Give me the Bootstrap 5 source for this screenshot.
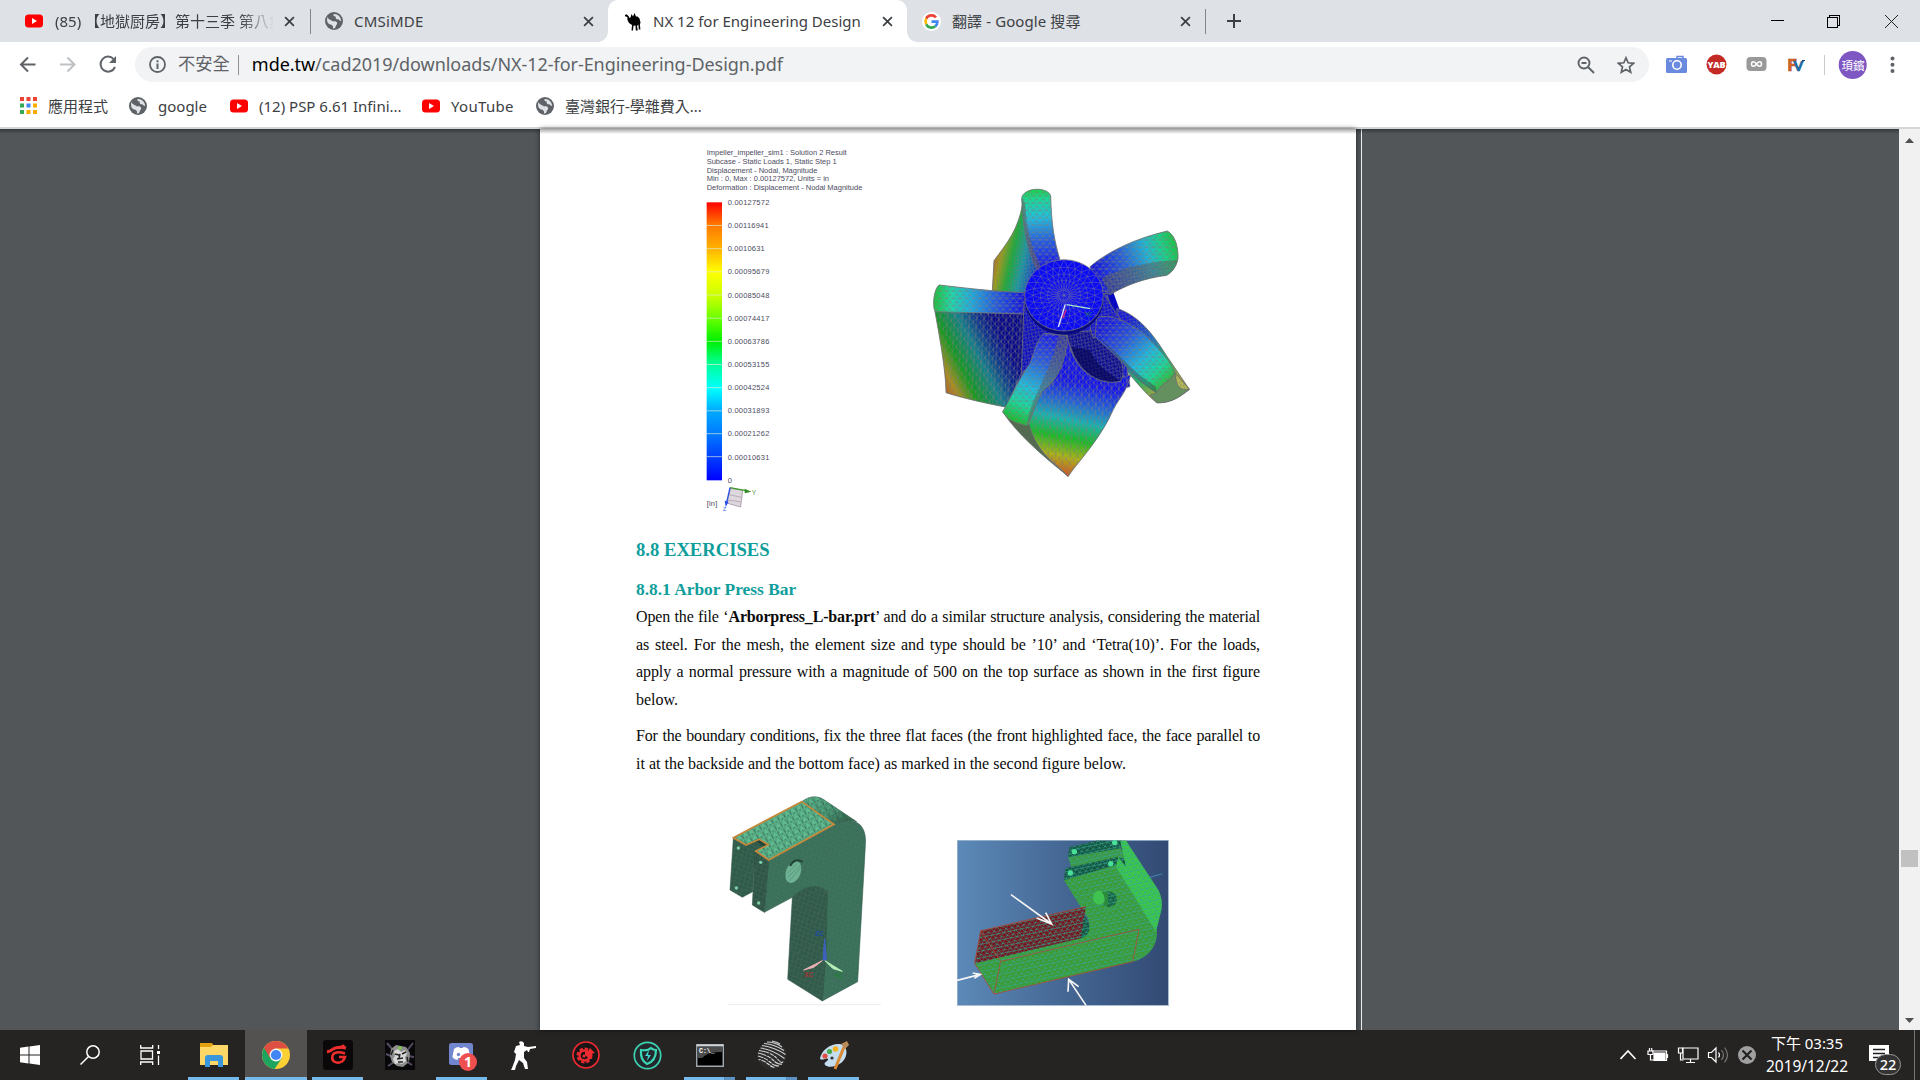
<!DOCTYPE html>
<html lang="zh-Hant">
<head>
<meta charset="utf-8">
<title>NX 12 for Engineering Design</title>
<link href="https://cdn.jsdelivr.net/npm/bootstrap@5.3.0/dist/css/bootstrap.min.css" rel="stylesheet">
<script src="https://cdn.jsdelivr.net/npm/bootstrap@5.3.0/dist/js/bootstrap.bundle.min.js"></script>
<style>
body{width:1920px;height:1080px;overflow:hidden;font-family:"Noto Sans","Noto Sans CJK TC",sans-serif;color:#3c4043;background:#fff}
svg{display:block;flex:none}
.tabstrip{height:42px;background:#dee1e6;font-size:15px;padding-left:8px}
.btab{height:42px;width:300px;padding:0 14px 0 17px;gap:11px;position:relative;flex:none}
.btab .ttl{flex:1;white-space:nowrap;overflow:hidden;line-height:24px;padding-bottom:1px}
.btab.fade-end .ttl{-webkit-mask-image:linear-gradient(90deg,#000 185px,transparent 219px)}
.btab.current{background:#fff;border-radius:10px 10px 0 0}
.btab.current::before,.btab.current::after{content:"";position:absolute;bottom:0;width:10px;height:10px}
.btab.current::before{left:-10px;background:radial-gradient(circle at 0 0,transparent 9.5px,#fff 10px)}
.btab.current::after{right:-10px;background:radial-gradient(circle at 100% 0,transparent 9.5px,#fff 10px)}
.tsep{width:1px;height:25px;background:#83868b;flex:none}
.toolbar{height:45px;background:#fff}
.omni{width:1514px;height:35px;border-radius:18px;background:#f1f3f4;font-size:18px;padding:0 14px 0 14px;color:#5f6368}
.omni span{white-space:nowrap;line-height:30px;padding-bottom:2px}
.vsep{width:1px;height:20px;background:#c8cacc;flex:none}
.marks{height:40px;font-size:15px;padding:0 0 3px 20px}
.marks span{white-space:nowrap;line-height:24px;flex:none;margin-left:11px}
.viewer{height:903px;background:#525659;border-top:2px solid #d5d6da;position:relative}
.viewer::after{content:"";position:absolute;left:0;right:21px;top:0;height:5px;background:linear-gradient(#0005,#0000)}
.sheet{width:816px;margin-left:540px;padding-left:96px;background:#fff;flex:none;height:901px;box-shadow:0 0 5px #0009}
.edge{width:1px;margin-left:5px;background:#eceef0;flex:none}
.sbar{width:21px;background:#f1f1f1;margin-left:auto}
.thumb{width:17px;height:17px;background:#c1c1c1;margin:701px auto 0 2px}
.doc{width:624px;font-family:"Liberation Serif",serif;color:#0a0a0a}
.doc h2,.doc h3{color:#0f9e9c;font-weight:bold;margin:0}
.doc h2{font-size:18.65px;line-height:24px;margin-top:17.500px}
.doc h3{font-size:17.4px;line-height:24px;margin-top:15.500px;margin-bottom:2px}
.doc p{font-size:16px;letter-spacing:-.1px;word-spacing:.45px;line-height:27.6px;margin:0 0 8.6px}
.doc p span{display:block;white-space:nowrap;text-align:justify;text-align-last:justify}
.doc p span.tight{letter-spacing:-.16px;word-spacing:0}
.doc p span.end{text-align-last:left;letter-spacing:0;word-spacing:0}
.taskbar{height:50px;background:#262323;color:#fff}
.tk{height:50px;flex:none;display:flex;justify-content:center;align-items:center;position:relative;width:62px}
.tk.sys{width:60px}
.tk.run::after{content:"";position:absolute;left:5.5px;right:5.5px;bottom:0;height:3px;background:#76b9ed}
.tk.multi::after{background:linear-gradient(90deg,#76b9ed 40px,#4f7ba0 40px,#5d93c2 41px)}
.tk.on{background:#545151}.tk.on::after{left:0;right:0}
.clock{font-size:15px;line-height:23px;text-align:center;width:94px;letter-spacing:-.05px}
</style>
</head>
<body class="d-flex flex-column">
<svg width="0" height="0" class="position-absolute">
<defs>
<symbol id="yt" viewBox="0 0 18 18"><rect y="2.500" width="18" height="13" rx="3.500" fill="#f00"/><path d="M7 6l5 3-5 3z" fill="#fff"/></symbol>
<symbol id="globe" viewBox="0 0 18 18"><circle cx="9" cy="9" r="9" fill="#5f6368"/><path d="M2.500 5C1.500 7.500 2 10.500 4 12c1.500.8 3.500.5 4 2.500v2c2.500 0 2.500-1.500 3-3 .8-1 1.500-1.500 1-3C11 9 9.500 9 8 9.500 7 8 4 8.500 2.500 5zM8.500 2C8 4 9.500 4.500 10.800 4.500c-.5 2 .5 3 2.200 2.800 1 .2 1.700 1.700 3.200 1.700C16 5 12.500 1.500 8.500 2z" fill="#dfe2e6"/></symbol>
<symbol id="cls" viewBox="0 0 12 12"><path d="M1.200 1.200l9.600 9.600M10.800 1.200l-9.600 9.600" stroke="#3c4043" stroke-width="1.900"/></symbol>
<pattern id="mesh" width="20" height="22" patternUnits="userSpaceOnUse"><path d="M0 0H20M0 11H20M0 0L10 11 20 0M0 22L10 11 20 22" fill="none" stroke="#7d8078" stroke-width="1.800" opacity=".85"/></pattern>
<pattern id="meshA" width="22" height="26" patternUnits="userSpaceOnUse" patternTransform="rotate(4)"><path d="M0 0L11 13 22 0M0 26L11 13 22 26M11 0V26M0 0V26" fill="none" stroke="#7d7f78" stroke-width="1.900" opacity=".85"/></pattern>
<pattern id="meshF" width="14" height="15" patternUnits="userSpaceOnUse" patternTransform="rotate(35)"><path d="M0 0H14M0 0L7 15 14 0" fill="none" stroke="#7d8078" stroke-width="1.700" opacity=".85"/></pattern>
<pattern id="meshG" width="20" height="20" patternUnits="userSpaceOnUse" patternTransform="rotate(-27)"><path d="M0 0H20M0 0L10 20 20 0M10 0V20" fill="none" stroke="#284a3e" stroke-width="1.900" opacity=".6"/></pattern>
<pattern id="meshS" width="18" height="20" patternUnits="userSpaceOnUse" patternTransform="rotate(-27)"><path d="M0 0H18M0 0L9 20 18 0" fill="none" stroke="#5d7a68" stroke-width="1.600" opacity=".55"/></pattern>
<pattern id="meshH" width="18" height="20" patternUnits="userSpaceOnUse" patternTransform="rotate(-12)"><path d="M0 0H18M0 10H18M0 0L9 10 18 0M0 20L9 10 18 20" fill="none" stroke="#2fa89a" stroke-width="2.100" opacity=".85"/></pattern>
</defs></svg>

<header>
<div class="tabstrip d-flex align-items-center">
 <div class="btab fade-end d-flex align-items-center" style="padding-right:13px"><svg width="18" height="18"><use href="#yt"/></svg><span class="ttl" style="margin-left:1px">(85) 【地獄厨房】第十三季 第八集</span><svg width="11" height="11"><use href="#cls"/></svg></div>
 <div class="tsep" style="margin-left:2px"></div>
 <div class="btab d-flex align-items-center" style="width:297px;padding-left:14px"><svg width="18" height="18"><use href="#globe"/></svg><span class="ttl" style="letter-spacing:.2px">CMSiMDE</span><svg width="11" height="11"><use href="#cls"/></svg></div>
 <div class="btab current d-flex align-items-center" style="width:299px"><svg width="16" height="19" viewBox="0 0 16 19"><path d="M0 3l1.500-.8 2 1.800 1 2 1-.5L6.500 2 8 4.500 9.500 1l1.500 3.500h1.500l2 2 1 4-.6 2 .5 5h-1.600l-.4-5-1.400 1.500.8 4.500h-2l-.3-5-2 .3-.5 4.700H6.500L7 13 4 11 2.500 8 2.300 5 0 4.300z" fill="#000"/></svg><span class="ttl" style="margin-left:1px">NX 12 for Engineering Design</span><svg width="11" height="11"><use href="#cls"/></svg></div>
 <div class="btab d-flex align-items-center" style="width:298px;padding-left:15px"><svg width="19" height="19" viewBox="0 0 19 19"><circle cx="9.500" cy="9.500" r="9.500" fill="#fff"/><g fill="none" stroke-width="2.700"><path d="M14 5.300A6 6 0 0 0 4.200 6.700" stroke="#ea4335"/><path d="M4.200 6.700a6 6 0 0 0 0 5.600" stroke="#fbbc05"/><path d="M4.200 12.300a6 6 0 0 0 9.200 1.900" stroke="#34a853"/><path d="M13.400 14.200a6 6 0 0 0 2-4.600H9.500" stroke="#4285f4"/></g></svg><span class="ttl" style="letter-spacing:.1px">翻譯 - Google 搜尋</span><svg width="11" height="11"><use href="#cls"/></svg></div>
 <div class="tsep"></div>
 <svg width="16" height="16" style="margin-left:20px"><path d="M8 1v14M1 8h14" stroke="#3c4043" stroke-width="2"/></svg>
 <svg class="ms-auto" width="150" height="20" viewBox="1765 8 150 20" shape-rendering="crispEdges" style="margin-right:5px"><path d="M1771 17.500h13" stroke="#000"/><path d="M1827.500 14.500h10v10h-10zM1829.500 14v-1.500h10v10h-2" fill="none" stroke="#000"/><path d="M1885 12l13 13M1898 12l-13 13" stroke="#222" shape-rendering="auto"/></svg>
</div>
<div class="toolbar d-flex align-items-center">
 <svg width="135" height="35" viewBox="0 47 135 35" fill="none" stroke="#5f6368" stroke-width="2"><path d="M35.500 64.500H21M28 57.500l-7 7 7 7"/><path d="M60 64.500h14.500M67.500 57.500l7 7-7 7" stroke="#bdc1c6"/><path d="M114 59.500A7.500 7.500 0 1 0 115 67"/><path d="M116 56v7h-7z" fill="#5f6368" stroke="none"/></svg>
 <div class="omni d-flex align-items-center">
  <svg width="17" height="17"><circle cx="8.500" cy="8.500" r="7.500" fill="none" stroke="#5f6368" stroke-width="1.800"/><path d="M8.500 4.200v2M8.500 7.500v5.500" stroke="#5f6368" stroke-width="2"/></svg>
  <span style="margin-left:12px;font-size:17.300px">不安全</span><i class="vsep" style="margin:0 13px 0 8px;background:#8c8f93"></i>
  <span style="letter-spacing:-.05px"><b class="fw-normal text-black">mde.tw</b>/cad2019/downloads/NX-12-for-Engineering-Design.pdf</span>
  <svg class="ms-auto" width="18" height="18" fill="none" stroke="#5f6368" stroke-width="1.900"><circle cx="7" cy="7" r="5.500"/><path d="M11 11l6 6M4.500 7h5"/></svg>
  <svg width="18" height="18" style="margin-left:22px" fill="none" stroke="#5f6368" stroke-width="1.700"><path d="M9 1.800l2.200 5 5.400.5-4.100 3.600 1.200 5.300L9 13.400l-4.700 2.800 1.200-5.300L1.400 7.300l5.400-.5z"/></svg>
 </div>
 <svg width="271" height="35" viewBox="1649 47 271 35">
  <rect x="1666" y="58" width="21" height="15" rx="1.500" fill="#6a8adf"/><path d="M1677 59v-2.500h6V59" fill="none" stroke="#6a8adf" stroke-width="1.500"/><circle cx="1677" cy="65" r="4.200" fill="none" stroke="#fff" stroke-width="1.600"/><path d="M1669 61h3" stroke="#fff"/>
  <circle cx="1716.500" cy="64.500" r="10" fill="#c32a25"/><text x="1707.500" y="67.800" font-family="Open Sans" font-weight="800" font-size="9" fill="#fff" textLength="18">YAB</text>
  <rect x="1746.500" y="57" width="20" height="14" rx="4" fill="#999"/><path d="M1756.500 64c-2-3-5-3-5 0s3 3 5 0 5-3 5 0-3 3-5 0" fill="none" stroke="#fff" stroke-width="1.500"/>
  <text x="1787.500" y="70.500" font-family="Lato" font-weight="900" font-size="16" fill="#e0702a" stroke="#a33a16" stroke-width=".7" textLength="8">F</text><text x="1793.500" y="71" font-family="Lato" font-weight="900" font-size="14" fill="#1673b5" stroke="#17426e" stroke-width=".5" textLength="9">V</text><path d="M1802 60.500h3" stroke="#246"/>
  <path d="M1824.500 55v20" stroke="#c8cacc"/><circle cx="1852.700" cy="65" r="14" fill="#7e57c2"/><text x="1841.500" y="69.500" font-size="11.500" fill="#fff" textLength="23">頊鑌</text>
  <g fill="#5f6368"><circle cx="1892.500" cy="58.500" r="2"/><circle cx="1892.500" cy="64.700" r="2"/><circle cx="1892.500" cy="71" r="2"/></g>
 </svg>
</div>
<nav class="marks d-flex align-items-center">
 <svg width="17" height="17"><path d="M0 0h4v4H0zM6.500 0h4v4h-4zM13 0h4v4h-4z" fill="#ea4335"/><path d="M0 6.500h4v4H0zM0 13h4v4H0z" fill="#34a853"/><path d="M6.500 6.500h4v4h-4z" fill="#4285f4"/><path d="M13 6.500h4v4h-4zM6.500 13h4v4h-4zM13 13h4v4h-4z" fill="#fbab00"/></svg>
 <span style="width:81px">應用程式</span><svg width="18" height="18"><use href="#globe"/></svg>
 <span style="width:72px">google</span><svg width="18" height="18"><use href="#yt"/></svg>
 <span style="width:163px">(12) PSP 6.61 Infini...</span><svg width="18" height="18"><use href="#yt"/></svg>
 <span style="width:85px;letter-spacing:.3px">YouTube</span><svg width="18" height="18"><use href="#globe"/></svg>
 <span>臺灣銀行-學雜費入...</span>
</nav>
</header>

<main class="viewer d-flex">
<article class="sheet">
 <div class="d-flex align-items-start" style="margin-left:44px">
 <svg width="230" height="391" viewBox="0 -3 690 1173" font-family="Liberation Sans" font-size="22.500" fill="#4c4c62">
  <defs><linearGradient id="bar" x2="0" y2="1"><stop offset="0" stop-color="#f00"/><stop offset=".08" stop-color="#ff7800"/><stop offset=".17" stop-color="#ffb400"/><stop offset=".25" stop-color="#ff0"/><stop offset=".34" stop-color="#c8ff00"/><stop offset=".42" stop-color="#6f0"/><stop offset=".5" stop-color="#00f000"/><stop offset=".58" stop-color="#00ff96"/><stop offset=".67" stop-color="#0ff"/><stop offset=".75" stop-color="#00aaff"/><stop offset=".83" stop-color="#007cff"/><stop offset=".92" stop-color="#003cff"/><stop offset="1" stop-color="#00f"/></linearGradient></defs>
  <text x="80" y="76" textLength="420">Impeller_impeller_sim1 : Solution 2 Result</text><text x="80" y="102" textLength="390">Subcase - Static Loads 1, Static Step 1</text><text x="80" y="128" textLength="332">Displacement - Nodal, Magnitude</text><text x="80" y="154" textLength="367">Min : 0, Max : 0.00127572, Units = in</text><text x="80" y="180" textLength="467">Deformation : Displacement - Nodal Magnitude</text>
  <rect x="80" y="217" width="46" height="834" fill="url(#bar)"/>
  <path d="M80 286.500h46M80 356h46M80 425.500h46M80 495h46M80 564.500h46M80 634h46M80 703.500h46M80 773h46M80 842.500h46M80 911h46M80 980h46" stroke="#dcecd8" stroke-width="2"/>
  <g><text x="143" y="225" textLength="125">0.00127572</text><text x="143" y="294" textLength="123">0.00116941</text><text x="143" y="364" textLength="111">0.0010631</text><text x="143" y="433" textLength="125">0.00095679</text><text x="143" y="503" textLength="125">0.00085048</text><text x="143" y="572" textLength="125">0.00074417</text><text x="143" y="642" textLength="125">0.00063786</text><text x="143" y="711" textLength="125">0.00053155</text><text x="143" y="781" textLength="125">0.00042524</text><text x="143" y="850" textLength="125">0.00031893</text><text x="143" y="919" textLength="125">0.00021262</text><text x="143" y="989" textLength="125">0.00010631</text><text x="143" y="1058">0</text><text x="80" y="1128" textLength="32">[in]</text></g>
  <path d="M152 1075l36 6-6 50-42-12z" fill="#ddd8dd" stroke="#977f95" stroke-width="2"/><path d="M147 1094l38 8M144 1110l38 6" stroke="#a996a8" stroke-width="2"/><path d="M150 1073l48 9" stroke="#3b9b28" stroke-width="4"/><path d="M194 1076l20 9-20 5z" fill="#2f8a22"/><path d="M150 1073l-10 45" stroke="#2a50e8" stroke-width="4"/><path d="M134 1112l12 3-9 16z" fill="#2a50e8"/><text x="215" y="1096" font-size="20" fill="#5aa050">Y</text><text x="128" y="1142" font-size="18" fill="#4a70e8">Z</text>
 </svg>
 <svg width="300" height="320" viewBox="0 0 900 960" style="margin-top:41px" stroke-linejoin="round">
  <defs>
  <linearGradient id="ga" gradientUnits="userSpaceOnUse" x1="240" y1="290" x2="380" y2="320"><stop stop-color="#c05a20"/><stop offset=".18" stop-color="#a0a010"/><stop offset=".4" stop-color="#10b030"/><stop offset=".65" stop-color="#109aa8"/><stop offset="1" stop-color="#1030d0"/></linearGradient>
  <linearGradient id="gb" gradientUnits="userSpaceOnUse" x1="380" y1="55" x2="400" y2="290"><stop stop-color="#10d840"/><stop offset=".15" stop-color="#10e0a0"/><stop offset=".38" stop-color="#18c4e8"/><stop offset=".65" stop-color="#2060e8"/><stop offset="1" stop-color="#1010f0"/></linearGradient>
  <linearGradient id="gc" gradientUnits="userSpaceOnUse" x1="810" y1="230" x2="560" y2="320"><stop stop-color="#10c830"/><stop offset=".2" stop-color="#10d890"/><stop offset=".38" stop-color="#18b8e0"/><stop offset=".65" stop-color="#2060e0"/><stop offset="1" stop-color="#0c0ce8"/></linearGradient>
  <linearGradient id="gd" gradientUnits="userSpaceOnUse" x1="70" y1="390" x2="340" y2="400"><stop stop-color="#10c830"/><stop offset=".2" stop-color="#18e0b0"/><stop offset=".42" stop-color="#18b0e8"/><stop offset=".7" stop-color="#1c58e8"/><stop offset="1" stop-color="#0c0ce8"/></linearGradient>
  <linearGradient id="ge" gradientUnits="userSpaceOnUse" x1="95" y1="670" x2="310" y2="560"><stop stop-color="#c04818"/><stop offset=".17" stop-color="#b09018"/><stop offset=".36" stop-color="#0c9c18"/><stop offset=".62" stop-color="#0c8090"/><stop offset=".82" stop-color="#083090"/><stop offset="1" stop-color="#05058c"/></linearGradient>
  <linearGradient id="gf" gradientUnits="userSpaceOnUse" x1="520" y1="640" x2="460" y2="910"><stop stop-color="#1010f0"/><stop offset=".22" stop-color="#1c60e0"/><stop offset=".42" stop-color="#10b8b8"/><stop offset=".62" stop-color="#10c020"/><stop offset=".82" stop-color="#b0b810"/><stop offset="1" stop-color="#d85818"/></linearGradient>
  <linearGradient id="gg" gradientUnits="userSpaceOnUse" x1="440" y1="500" x2="320" y2="760"><stop stop-color="#1414f0"/><stop offset=".3" stop-color="#2458e8"/><stop offset=".6" stop-color="#18c0e8"/><stop offset=".8" stop-color="#10e0a0"/><stop offset="1" stop-color="#10c020"/></linearGradient>
  <linearGradient id="gh" gradientUnits="userSpaceOnUse" x1="590" y1="450" x2="775" y2="645"><stop stop-color="#1010e8"/><stop offset=".3" stop-color="#2050e8"/><stop offset=".6" stop-color="#18c0e8"/><stop offset=".8" stop-color="#10e0a0"/><stop offset="1" stop-color="#28c020"/></linearGradient>
  <linearGradient id="gi" gradientUnits="userSpaceOnUse" x1="660" y1="440" x2="830" y2="660"><stop stop-color="#1010e0"/><stop offset=".35" stop-color="#1870c8"/><stop offset=".6" stop-color="#10b860"/><stop offset=".85" stop-color="#b0b030"/><stop offset="1" stop-color="#c06020"/></linearGradient>
  <linearGradient id="shade" x2="1"><stop stop-color="#333" stop-opacity=".35"/><stop offset=".5" stop-color="#333" stop-opacity="0"/></linearGradient>
  </defs>
  <g stroke="#6a6e70" stroke-width="2.500">
  <path fill="#0808c0" stroke="none" d="M335 330L320 690 420 690 650 640 640 450 600 340z"/>
  <path fill="url(#ga)" data-m="meshF" d="M338 100C325 180 290 220 252 272L247 362 345 372 400 300 345 140z"/>
  <path fill="url(#gb)" data-m="mesh" d="M335 85C340 50 415 50 422 78 424 160 432 210 450 270L385 308C350 240 340 170 335 85z"/>
  <path fill="#555" fill-opacity=".5" data-m="meshF" stroke="none" d="M335 85C340 170 350 240 385 308L398 300C360 230 350 170 345 100z"/>
  <path fill="url(#gc)" data-m="mesh" d="M540 290C600 240 680 205 772 183 795 195 805 230 804 265 800 290 785 308 770 316 700 325 650 345 600 374L560 350z"/>
  <path fill="#444c50" fill-opacity=".4" data-m="meshF" stroke="none" d="M575 325C640 290 720 275 803 270 800 290 785 308 770 316 700 325 650 345 600 374z"/>
  <path fill="url(#gi)" data-m="meshF" d="M620 415C700 440 745 520 775 565L838 658C800 690 770 700 740 698 700 665 670 625 640 590z"/>
  <path fill="#0c0ce0" data-m="meshA" d="M342 400L335 640 400 700 660 650 640 520 590 370z"/>
  <path fill="url(#ge)" data-m="meshA" d="M75 425L345 430 338 600 290 712C230 700 160 685 108 668 108 600 85 480 75 425z"/>
  <path fill="url(#gd)" data-m="mesh" d="M88 345C150 352 250 365 345 368L342 432 75 425C65 400 75 350 88 345z"/>
  <path fill="#0a0ac8" data-m="meshF" d="M342 400L334 610 370 580 402 490 480 495 450 470z"/>
  <path fill="url(#gf)" data-m="meshA" d="M470 490C490 600 540 650 662 615 645 680 625 680 600 740 560 820 500 880 474 920 440 880 380 850 355 765 390 690 390 560 470 500z"/>
  <path fill="#080898" data-m="meshF" d="M470 488C490 600 560 650 632 634 655 590 620 540 570 480z"/>
  <path fill="#040450" fill-opacity=".6" stroke="none" d="M485 530C500 600 570 645 628 632 600 610 560 590 540 540z"/>
  <path fill="#0e0ed8" data-m="meshF" d="M580 370C600 400 625 440 640 460L550 505 540 470z"/>
  <path fill="url(#gh)" data-m="mesh" d="M560 445C590 430 640 445 700 490 740 530 780 570 795 608 780 635 755 640 740 668 690 640 660 600 620 560L555 500z"/>
  <path fill="#3c4450" fill-opacity=".45" stroke="none" d="M555 490L620 550C660 590 690 620 738 650L740 668C690 640 660 600 620 560z"/>
  <path fill="#64905f" d="M740 668C755 640 785 630 795 608 798 640 810 658 838 658 800 690 770 700 740 698L720 675z"/>
  <path fill="#b8c050" data-m="meshF" d="M797 610L838 658C810 665 795 645 797 610z"/>
  <path fill="#536b50" d="M278 725L358 765C380 850 440 885 474 918 400 860 320 790 278 725z"/>
  <path fill="url(#gg)" data-m="mesh" d="M402 490L470 497C475 560 440 640 400 660 375 700 365 740 352 767 320 762 290 748 278 725 310 670 330 620 360 580 375 540 380 510 402 490z"/>
  <path fill="#444c58" fill-opacity=".4" data-m="meshF" stroke="none" d="M446 494L470 497C475 560 440 640 400 660 375 700 365 740 352 767 355 690 420 620 446 494z"/>
  <ellipse cx="462" cy="384" rx="119" ry="110" fill="#0a0a80" stroke="none"/><ellipse cx="462" cy="376" rx="118" ry="107" fill="#0c0cf4" stroke-width="1.500"/>
  </g>
  <g id="hubmesh" fill="none" stroke="#7c7c90" stroke-width="1.500" opacity=".8"></g>
  <path d="M466 403l-21 68" stroke="#dfe6ff" stroke-width="4"/><path d="M470 404l70 12" stroke="#a8e8c8" stroke-width="4"/><path d="M468 420l-10 24" stroke="#e02080" stroke-width="4"/><text x="524" y="440" font-size="20" fill="#107060">YC</text>
 </svg>
 </div>
 <div class="doc">
  <h2>8.8 EXERCISES</h2>
  <h3>8.8.1 Arbor Press Bar</h3>
  <p><span class="tight">Open the file ‘<b>Arborpress_L-bar.prt</b>’ and do a similar structure analysis, considering the material</span><span>as steel. For the mesh, the element size and type should be ’10’ and ‘Tetra(10)’. For the loads,</span><span>apply a normal pressure with a magnitude of 500 on the top surface as shown in the first figure</span><span class="end">below.</span></p>
  <p><span class="tight">For the boundary conditions, fix the three flat faces (the front highlighted face, the face parallel to</span><span class="end">it at the backside and the bottom face) as marked in the second figure below.</span></p>
 </div>
 <div class="d-flex align-items-start" style="margin:-5.500px 0 0 74px">
 <svg width="180" height="240" viewBox="0 0 540 720">
  <defs><linearGradient id="bend" x2="1" y2=".6"><stop offset="0" stop-color="#5fbb8f"/><stop offset=".6" stop-color="#4c9c78"/><stop offset="1" stop-color="#35684f"/></linearGradient></defs>
  <path d="M52 674h462" stroke="#eee" stroke-width="3"/>
  <g stroke="#2c5243" stroke-width="1.500">
  <path fill="#23463a" stroke="none" d="M100 190L148 175 190 195 176 240 130 260z"/>
  <path data-m="meshS" fill="#2e5a49" d="M70 175L105 195 140 185 160 200 135 215 128 335 97 352 60 330z"/>
  <path data-m="meshS" fill="#38705a" d="M175 240L372 133C400 115 440 118 455 140 465 155 468 170 466 200L443 605 337 663 345 400 352 335C320 310 280 325 247 352L163 397z"/>
  <path data-m="meshS" fill="#2d5546" d="M135 215L176 240 163 397 127 375z"/>
  <path data-m="meshS" fill="#30594a" d="M247 352C275 325 315 305 352 335L348 520 337 663 233 598z"/>
  <path data-m="meshG" fill="url(#bend)" d="M275 65C300 45 325 48 340 58L440 125C415 118 390 122 372 133z"/>
  <path data-m="meshG" fill="#5fbc90" d="M70 173L275 65 372 133 176 240 137 213 175 194 148 178 108 195z"/>
  </g>
  <path d="M70 173L275 65 372 133 176 240 137 213 175 194 148 178 108 195z" fill="none" stroke="#c8893a" stroke-width="5"/>
  <ellipse cx="250" cy="276" rx="22" ry="34" transform="rotate(22 250 276)" fill="#6fb294"/><path d="M240 258c10-18 25-22 38-12" stroke="#23463a" fill="none" stroke-width="6"/><path d="M232 280l30-30M232 292l40-36M238 302l36-40" stroke="#4b8a70" fill="none" stroke-width="2"/>
  <g fill="#7fd0a8"><circle cx="85" cy="204" r="5"/><circle cx="79" cy="324" r="5"/><circle cx="152" cy="247" r="5"/><circle cx="146" cy="369" r="5"/></g>
  <path d="M344 475l5 65h-10z" fill="#3d62c0" stroke="#3d62c0" stroke-width="3"/><path d="M337 542l-56 28 30-8z" fill="#f0b8b8" stroke="#eab0b0" stroke-width="3"/><path d="M345 542l52 32-28-8z" fill="#c0f0c0" stroke="#b0eab0" stroke-width="3"/>
  <g font-family="Liberation Sans" font-size="19" font-weight="bold"><text x="316" y="469" fill="#1c48a8">ZC</text><text x="283" y="592" fill="#a83030">XC</text><text x="371" y="594" fill="#208030">YC</text></g>
 </svg>
 <svg width="211.700" height="165.700" viewBox="51 60 635 497" style="margin:60px 0 0 67px">
  <defs><linearGradient id="sky"><stop stop-color="#5c8ab8"/><stop offset=".5" stop-color="#456794"/><stop offset="1" stop-color="#324a74"/></linearGradient></defs>
  <path d="M51 60h635v497H51z" fill="url(#sky)" stroke="#a8bed2" stroke-width="4"/>
  <path d="M625 173l42-12" stroke="#3f82a8" stroke-width="3"/>
  <g>
  <path data-m="meshH" fill="#3f9a2c" d="M372 180L530 130 560 62 650 330C655 380 620 415 578 425L162 522 104 430 420 355C450 345 455 310 437 285z"/>
  <path data-m="meshH" fill="#40963a" d="M384 110L540 80 560 120 395 145z"/>
  <path data-m="meshH" fill="#155038" d="M388 82L470 62 545 62 540 85 384 112z"/>
  <path data-m="meshH" fill="#155038" d="M376 145L530 112 560 118 558 140 528 135 372 180z"/>
  <path data-m="meshH" fill="#3fc840" d="M541 62L558 62 655 210C665 230 668 250 664 270L648 335 528 140 535 112 558 140z"/>
  <path data-m="meshH" fill="#155038" d="M430 285C455 310 455 345 422 355z"/>
  <path data-m="meshH" fill="#7a1018" d="M122 332L437 260 422 355 104 430z"/>
  <path data-m="meshH" fill="#185a34" d="M500 215a25 23 0 1 1 0 45z"/>
  </g>
  <ellipse cx="477" cy="233" rx="18" ry="21" fill="#3fc250"/><path d="M485 216q16 18 4 42l15 0 0-42z" fill="#2b8a3c"/>
  <g fill="#48e098"><circle cx="403" cy="95" r="8"/><circle cx="524" cy="68" r="8"/><circle cx="391" cy="159" r="8"/><circle cx="512" cy="131" r="8"/></g>
  <path d="M104 430L122 332 437 260M104 430l58 92 416-97 19-97L182 424l-20 98M122 332l60 92" fill="none" stroke="#a84a3c" stroke-width="2.500"/>
  <g fill="none" stroke="#f4f4f4" stroke-width="5"><path d="M213 224L335 312M290 294l45 18-18-34M51 481l70-18M98 459l23 4-18 12M438 556l-52-78M384 515l2-37 30 22"/></g>
 </svg>
 </div>
</article>
<div class="edge"></div>
<div class="sbar d-flex flex-column align-items-center">
 <svg width="21" height="20"><path d="M6 14l4.500-5 4.500 5z" fill="#505050"/></svg><div class="thumb"></div><svg class="mt-auto" width="21" height="20"><path d="M6 8l4.500 5 4.500-5z" fill="#505050"/></svg>
</div>
</main>

<footer class="taskbar d-flex align-items-center">
 <div class="tk sys"><svg width="20" height="20"><path d="M0 2.800l8.500-1.200V9.500H0zM9.500 1.500L20 0v9.500H9.500zM0 10.500h8.500v8L0 17.300zM9.500 10.500H20V20L9.500 18.600z" fill="#fff"/></svg></div>
 <div class="tk sys"><svg width="20" height="20" fill="none" stroke="#fff" stroke-width="1.500"><circle cx="13" cy="7" r="6.200"/><path d="M8.500 11.500L.5 19.500"/></svg></div>
 <div class="tk sys"><svg width="21" height="20" fill="none" stroke="#fff" stroke-width="1.300"><path d="M.7 0v3h12V0M.7 20v-3h12v3M1 6h11.500v8H1zM18.500 0v4M18.500 10.500V20"/><path d="M17 6h3v3h-3z" fill="#fff" stroke="none"/></svg></div>
 <div class="tk run" style="margin-left:2.500px"><svg width="28" height="24"><path d="M0 0h12l2 3h14v19H0z" fill="#e0a010"/><path d="M0 4h11l2-2h15v20H0z" fill="#ffd766"/><path d="M5 24v-9q0-3 3-3h12q3 0 3 3v9h-5v-6h-8v6z" fill="#3a96dd"/></svg></div>
 <div class="tk run on"><svg width="28" height="28" viewBox="0 0 28 28"><circle cx="14" cy="14" r="14" fill="#fccf35"/><path d="M14 14L2 6.800A14 14 0 0 0 12.500 27.900L20 17z" fill="#1da45e"/><path d="M2 6.800A14 14 0 0 1 26.300 7.400H14L8 17z" fill="#dd4f43"/><circle cx="14" cy="14" r="6.500" fill="#f4f4f4"/><circle cx="14" cy="14" r="5.100" fill="#4285f4"/></svg></div>
 <div class="tk run"><svg width="30" height="30"><rect width="30" height="30" rx="3" fill="#0a0808"/><g fill="none" stroke="#ee2d2d"><path d="M4 12q4-1 6-3 5-3 13-1" stroke-width="3"/><path d="M15 8q4 0 6-3" stroke-width="2.500"/><path d="M22 13.500q-9-3-12 1-2 4 1 7 4 2.500 8 0 2.500-2 3-4.500h-6" stroke-width="2.600"/></g></svg></div>
 <div class="tk"><svg width="30" height="30"><path d="M0 0h30v30H0z" fill="#08070a"/><path d="M2 3l6 7M28 3l-7 9M3 26l9-6M27 25l-8-5M1 14l5 2M29 17l-6-1" stroke="#574a63" stroke-width="2"/><path d="M6 9l5-4 5 1 5 1 4 6-1 9-6 5-6-1-5-4-2-6z" fill="#8d8d8d"/><path d="M9 11l4-2 3 3 4-2 2 4-2 3 1 4-4 3-3-1-4 1-2-5 2-3z" fill="#d8d8d8"/><path d="M10 14l4 1M17 14l4-2M12 19l6-1M13 22l5 0M15 14l-1 4M8 10l-2 5M22 17l1 5" stroke="#222" stroke-width="1.500"/><circle cx="15" cy="8" r="1.800" fill="#7c4"/></svg></div>
 <div class="tk run"><svg width="30" height="32" viewBox="0 0 30 32"><rect x="2" y="4" width="24" height="22" rx="2.500" fill="#7186cf"/><path d="M7 10q2-2 5-2l.7 1h3l.7-1q3 0 5 2l2 8q-2 3-5 3l-1-2h-6l-1 2q-3 0-5-3z" fill="#fff"/><circle cx="11.500" cy="15.500" r="1.700" fill="#7186cf"/><circle cx="21" cy="23" r="9" fill="#f04f50"/><text x="21" y="28" text-anchor="middle" font-size="14" font-weight="bold" fill="#fff">1</text></svg></div>
 <div class="tk"><svg width="26" height="29" viewBox="0 0 26 29"><path d="M8 1q3-2 5 1v3l4 1 8-1v2l-6 1-1 3h-1l-1-2-3 2v6l3 4 1 7h-3l-2-6-4-3-3 6-1 4H0l1-2 3-8 1-6-2-2 2-6 4-1z" fill="#fff"/></svg></div>
 <div class="tk"><svg width="28" height="28" viewBox="0 0 28 28"><circle cx="14" cy="14" r="13" fill="#191516" stroke="#ed2b31" stroke-width="1.700"/><circle cx="12.500" cy="14.500" r="5" fill="none" stroke="#ed2b31" stroke-width="2.500"/><circle cx="12.500" cy="14.500" r="7" fill="none" stroke="#ed2b31" stroke-width="2" stroke-dasharray="3.500 2"/><path d="M13 11l3-1 2-3 5 5-2.500.5q0 5-4.500 7 1-4-3-5z" fill="#ed2b31"/><circle cx="12" cy="15" r="1.600" fill="#ed2b31"/></svg></div>
 <div class="tk"><svg width="29" height="29" viewBox="0 0 29 29"><circle cx="14.500" cy="14.500" r="13.200" fill="#24272b" stroke="#3ad0b0" stroke-width="1.700"/><path d="M8 9q7 1 10-2 2 2 5 2 0 11-9 14-7-4-6-14z" fill="none" stroke="#3ad6b6" stroke-width="2.200"/><path d="M16 9l-4 6h3l-1 5 4-6h-3z" fill="#3ad6d0"/></svg></div>
 <div class="tk run multi"><svg width="28" height="23"><path d="M.7.700h26.600v21.600H.7z" fill="#000" stroke="#a0a8ae" stroke-width="1.500"/><path d="M1.500 3h25v5Q12 7 6 14H1.500z" fill="#4c4c4c"/><path d="M1 1.500h26" stroke="#cfd4d8" stroke-width="2"/><text x="3" y="9" font-family="Liberation Mono" font-size="6.500" font-weight="bold" fill="#fff">C:\_</text></svg></div>
 <div class="tk run multi"><svg width="30" height="30" viewBox="0 0 30 30"><circle cx="15" cy="15" r="14.500" fill="#2c2c2c"/><g fill="none" stroke="#d0d0d0" stroke-width="1.100"><path d="M10 2q8 0 15 5M7 3.500q11 1 20 7M5 5.500q13 2 23.500 9M3.500 8q13 2 24 10.500M2 10.500q13 2 18 8t6 3M1 13q10 2 15 7t9 4M1 16q8 2 12 6t9 4M1.500 19.500q6 1 9 4t7 4M15 1q5 1 8 3"/></g><path d="M6 25l12-10M10 28l13-12M3 21l10-8" stroke="#2c2c2c" stroke-width="1"/></svg></div>
 <div class="tk run"><svg width="30" height="30" viewBox="0 0 30 30"><path d="M1 19C2 10 12 3 21 4c9 2 8 14 1 19-5 4-13 5-16 2-2-3 4-4 3-6s-5 2-8 0z" fill="#c4def0"/><circle cx="6" cy="16" r="2.600" fill="#e04c44"/><circle cx="10.500" cy="11.500" r="2.600" fill="#49a94c"/><circle cx="16.500" cy="9" r="2.800" fill="#f5b21c"/><circle cx="13" cy="18" r="1.600" fill="#333"/><path d="M25 7L16 29" stroke="#d98a33" stroke-width="3"/><path d="M22 4l6-3 2 4-4 4z" fill="#b98a5a"/></svg></div>
 <div class="ms-auto d-flex align-items-center">
 <svg width="140" height="30" viewBox="1620 1040 140 30" fill="none" stroke="#fff" stroke-width="1.600"><path d="M1620.500 1059l7.500-8 7.500 8"/><g stroke-width="1.200"><path d="M1652 1051h14.500v9.500h-13M1667.500 1054v4"/><path d="M1654 1053h11v6.500h-11z" fill="#fff"/><path d="M1648 1051h5v3.500h-5zM1649.500 1048v3M1651.700 1048v3M1650.500 1054.500v5.500h4"/><path d="M1683 1048h15v11h-15zM1690.500 1059v3.500M1686 1062.500h9"/><path d="M1678.500 1048h4v5h-4zM1680.500 1053v7h3"/><path d="M1708.500 1052.500h3l4.500-4.500v14l-4.500-4.500h-3z"/><path d="M1718.500 1052.500q2 2.500 0 5"/><path d="M1721.500 1050q4 5 0 10M1724.500 1047.500q6 7.500 0 15" stroke="#777"/></g><circle cx="1747" cy="1055" r="9" fill="#a0a0a0" stroke="none"/><path d="M1742.500 1050.500l9 9M1751.500 1050.500l-9 9" stroke="#222" stroke-width="2.200"/></svg>
 <div class="clock" style="margin-right:2px">下午 03:35<br><span class="text-nowrap" style="font-size:15.500px">2019/12/22</span></div>
 <svg width="64" height="50" viewBox="1856 1030 64 50"><path d="M1869 1045h20v16h-9l-4 4v-4h-7z" fill="#fff"/><path d="M1873 1049.500h12M1873 1053.500h12M1873 1057.500h8" stroke="#222" stroke-width="1.300"/><rect x="1875.500" y="1054.500" width="25" height="20" rx="10" fill="#333" stroke="#999"/><text x="1888" y="1069.500" font-size="14.500" text-anchor="middle" fill="#fff" font-weight="500">22</text><path d="M1914.500 1030v50" stroke="#777"/></svg>
 </div>
</footer>
<script>
// Overlay the triangulated mesh on every face that asks for one
document.querySelectorAll('[data-m]').forEach(function(p){
  var c=p.cloneNode();c.removeAttribute('data-m');c.removeAttribute('fill-opacity');c.setAttribute('fill','url(#'+p.dataset.m+')');c.setAttribute('stroke','none');p.after(c);
});
// Radial mesh of the impeller hub: zigzag triangles between rings that tighten toward the centre
var g=document.getElementById('hubmesh'),d='',radii=[.12,.26,.42,.6,.79,1],cx=462,cy=376,prev=null,n=26;
radii.forEach(function(r,k){var a=[],i;
 for(i=0;i<n;i++){var t=(i+(k%2)/2)*2*Math.PI/n;a.push([(cx+118*r*Math.cos(t)).toFixed(1),(cy+107*r*Math.sin(t)).toFixed(1)]);}
 for(i=0;i<n;i++){if(k>1)d+='M'+a[i]+'L'+a[(i+1)%n];
  if(prev)d+='M'+a[i]+'L'+prev[i]+'M'+a[i]+'L'+prev[(i+(k%2?1:n-1))%n];else if(i%2)d+='M'+a[i]+'L'+cx+','+cy;}
 prev=a;});
g.innerHTML='<path d="'+d+'"/>';
</script>
</body>
</html>
